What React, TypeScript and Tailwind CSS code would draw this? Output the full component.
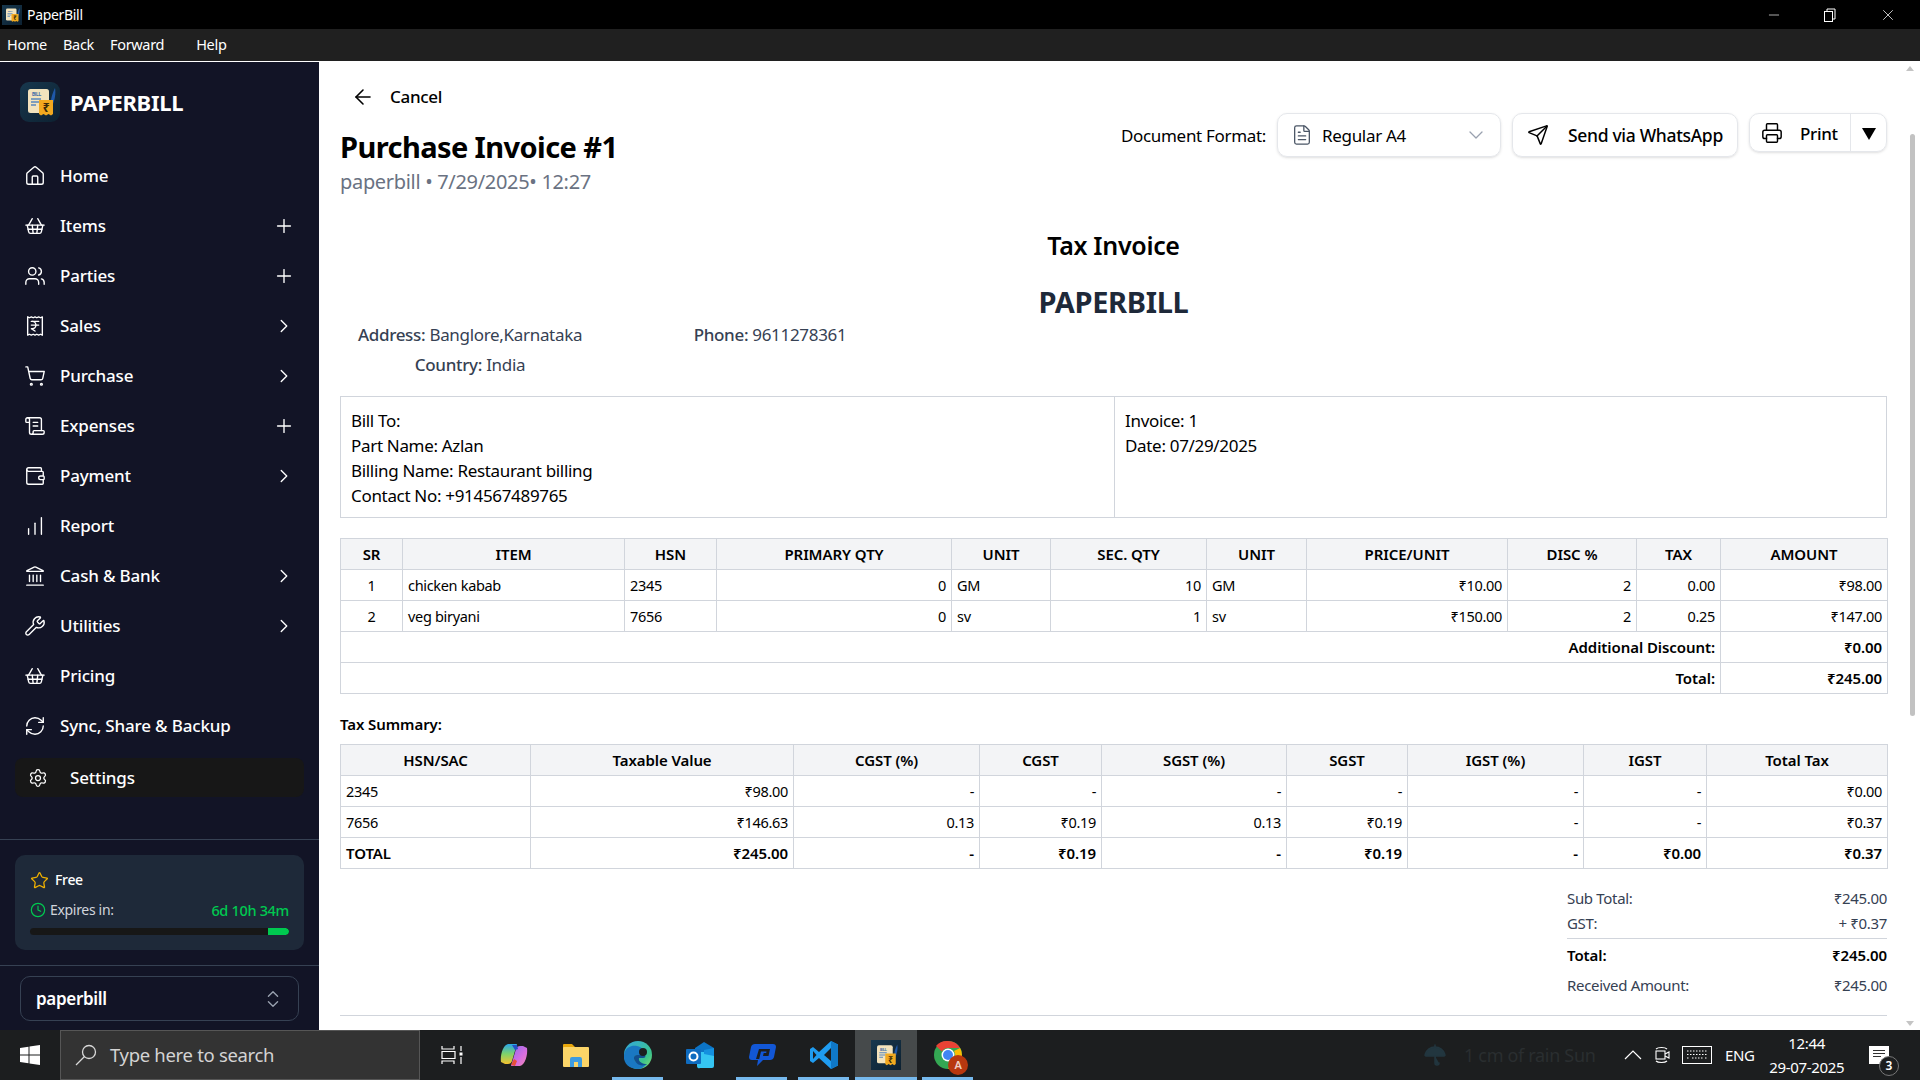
import {
  ArrowLeft, ChartNoAxesColumnIncreasing, ChevronDown, ChevronRight, ChevronsUpDown, Clock, FileText, House, Landmark,
  Minus, Plus, Printer, ReceiptIndianRupee, RefreshCw, ScrollText, Send, Settings, ShoppingBasket, ShoppingCart, Star,
  Umbrella, Users, Wallet, Wrench, X,
} from 'lucide-react';

const navItems = [
  { label: 'Home', icon: House },
  { label: 'Items', icon: ShoppingBasket, action: 'plus' },
  { label: 'Parties', icon: Users, action: 'plus' },
  { label: 'Sales', icon: ReceiptIndianRupee, action: 'arrow' },
  { label: 'Purchase', icon: ShoppingCart, action: 'arrow' },
  { label: 'Expenses', icon: ScrollText, action: 'plus' },
  { label: 'Payment', icon: Wallet, action: 'arrow' },
  { label: 'Report', icon: ChartNoAxesColumnIncreasing },
  { label: 'Cash & Bank', icon: Landmark, action: 'arrow' },
  { label: 'Utilities', icon: Wrench, action: 'arrow' },
  { label: 'Pricing', icon: ShoppingBasket },
  { label: 'Sync, Share & Backup', icon: RefreshCw },
];

const itemRows = [
  ['1', 'chicken kabab', '2345', '0', 'GM', '10', 'GM', '₹10.00', '2', '0.00', '₹98.00'],
  ['2', 'veg biryani', '7656', '0', 'sv', '1', 'sv', '₹150.00', '2', '0.25', '₹147.00'],
];

const taxRows = [
  ['2345', '₹98.00', '-', '-', '-', '-', '-', '-', '₹0.00'],
  ['7656', '₹146.63', '0.13', '₹0.19', '0.13', '₹0.19', '-', '-', '₹0.37'],
];

const taxTotal = ['TOTAL', '₹245.00', '-', '₹0.19', '-', '₹0.19', '-', '₹0.00', '₹0.37'];

const cell = 'border border-[#d1d5dc] px-[5px] h-[31px] p-0';
const plain = 'pt-[1px]';
const bold = 'text-[15px] font-semibold tracking-[-0.005em]';
const head = 'border border-[#d1d5dc] bg-[#f3f4f6] h-[31px] p-0 text-center text-[15px] font-semibold tracking-[-0.005em]';

function Logo({ size, square }: { size: number; square?: boolean }) {
  return (
    <svg width={size} height={size} viewBox="0 0 40 40" className="shrink-0">
      <defs>
        <linearGradient id="logoBg" x1="0" y1="0" x2="1" y2="1">
          <stop offset="0" stopColor="#17384e" />
          <stop offset="1" stopColor="#0d2131" />
        </linearGradient>
      </defs>
      <rect width="40" height="40" rx={square ? 0 : 9} fill="url(#logoBg)" />
      <rect x="8" y="7" width="21" height="24" rx="2.5" fill="#f2e3bd" />
      <text x="12" y="14" fontSize="5" fontWeight="700" fill="#3f6fa8" fontFamily="Roboto, sans-serif">BILL</text>
      <path d="M11 17h10M11 20h8M11 23h5" stroke="#5a88bd" strokeWidth="1.4" />
      <path d="M31 24c-1-5 1-12 4-18 1 5 0 12-3 18z" fill="#1f58a8" />
      <path d="M19 18h14v14l-2 1.500-2.500-1.500-2.500 1.500-2.500-1.500-2.500 1.500-2-1.500z" fill="#f1a91f" />
      <text x="26" y="30" textAnchor="middle" fontSize="12" fontWeight="700" fill="#3a2a0a" fontFamily="'Noto Sans', sans-serif">₹</text>
    </svg>
  );
}

function NavRow({ item }: { item: (typeof navItems)[number] }) {
  const Icon = item.icon;
  return (
    <div className="flex h-[50px] items-center pl-[24px] pr-[24px] text-white">
      <Icon size={22} strokeWidth={1.5} className="shrink-0" />
      <span className="ml-[14px] flex-1 text-[17px] font-medium tracking-[-0.01em]">{item.label}</span>
      {item.action === 'plus' && <Plus size={22} strokeWidth={1.5} />}
      {item.action === 'arrow' && <ChevronRight size={22} strokeWidth={1.5} />}
    </div>
  );
}

function Sidebar() {
  return (
    <aside className="flex w-[319px] shrink-0 flex-col bg-[#121426]">
      <div className="ml-5 mt-5 flex h-10 items-center">
        <Logo size={40} />
        <span className="ml-[10px] text-[22px] font-bold text-white">PAPERBILL</span>
      </div>
      <nav className="mt-[29px]">
        {navItems.map((item) => (
          <NavRow key={item.label} item={item} />
        ))}
      </nav>
      <div className="mx-[15px] mt-[7px] flex h-[39px] items-center rounded-lg bg-[#171717] pl-[13px] text-white">
        <Settings size={20} strokeWidth={1.5} />
        <span className="ml-[22px] text-[17px] font-medium tracking-[-0.01em]">Settings</span>
      </div>
      <div className="mt-auto border-t border-[#364153] p-[15px]">
        <div className="h-[95px] rounded-[10px] bg-[#1e2939] px-[15px] pt-[15px]">
          <div className="flex h-5 items-center text-sm font-medium text-white">
            <Star size={19} strokeWidth={1.6} className="text-[#f0b100]" />
            <span className="ml-[6px]">Free</span>
          </div>
          <div className="mt-[10px] flex h-5 items-center text-sm">
            <Clock size={16} strokeWidth={1.8} className="text-[#00c950]" />
            <span className="ml-[4px] flex-1 text-[#d1d5dc]">Expires in:</span>
            <span className="text-[14.500px] font-medium text-[#00c950]">6d 10h 34m</span>
          </div>
          <div className="mt-2 h-[7px] overflow-hidden rounded-full bg-[#171717]">
            <div className="ml-auto h-full w-[21px] rounded-r-full bg-[#00c950]" />
          </div>
        </div>
      </div>
      <div className="h-[65px] border-t border-[#364153] px-5 pt-[10px]">
        <div className="flex h-[45px] items-center rounded-[10px] border border-[#364153] pl-[15px] pr-[14px] text-white">
          <span className="flex-1 text-[17px] font-semibold">paperbill</span>
          <ChevronsUpDown size={22} strokeWidth={1.5} className="text-[#99a1af]" />
        </div>
      </div>
    </aside>
  );
}

function ItemsTable() {
  const rightCols = [3, 5, 7, 8, 9, 10];
  return (
    <table className="w-[1547px] table-fixed border-collapse text-[14.500px] text-black">
      <thead>
        <tr>
          <th className={`${head} w-[62px]`}>SR</th>
          <th className={`${head} w-[222px]`}>ITEM</th>
          <th className={`${head} w-[92px]`}>HSN</th>
          <th className={`${head} w-[235px]`}>PRIMARY QTY</th>
          <th className={`${head} w-[99px]`}>UNIT</th>
          <th className={`${head} w-[156px]`}>SEC. QTY</th>
          <th className={`${head} w-[100px]`}>UNIT</th>
          <th className={`${head} w-[201px]`}>PRICE/UNIT</th>
          <th className={`${head} w-[129px]`}>DISC %</th>
          <th className={`${head} w-[84px]`}>TAX</th>
          <th className={`${head} w-[167px]`}>AMOUNT</th>
        </tr>
      </thead>
      <tbody>
        {itemRows.map((row) => (
          <tr key={row[0]}>
            {row.map((value, i) => (
              <td key={i} className={`${cell} ${plain} ${i === 0 ? 'text-center' : rightCols.includes(i) ? 'text-right' : 'text-left'}`}>
                {value}
              </td>
            ))}
          </tr>
        ))}
        <tr>
          <td colSpan={10} className={`${cell} ${bold} text-right`}>Additional Discount:</td>
          <td className={`${cell} ${bold} text-right`}>₹0.00</td>
        </tr>
        <tr>
          <td colSpan={10} className={`${cell} ${bold} text-right`}>Total:</td>
          <td className={`${cell} ${bold} text-right`}>₹245.00</td>
        </tr>
      </tbody>
    </table>
  );
}

function TaxTable() {
  return (
    <table className="w-[1547px] table-fixed border-collapse text-[14.500px] text-black">
      <thead>
        <tr>
          <th className={`${head} w-[190px]`}>HSN/SAC</th>
          <th className={`${head} w-[263px]`}>Taxable Value</th>
          <th className={`${head} w-[186px]`}>CGST (%)</th>
          <th className={`${head} w-[122px]`}>CGST</th>
          <th className={`${head} w-[185px]`}>SGST (%)</th>
          <th className={`${head} w-[121px]`}>SGST</th>
          <th className={`${head} w-[176px]`}>IGST (%)</th>
          <th className={`${head} w-[123px]`}>IGST</th>
          <th className={`${head} w-[181px]`}>Total Tax</th>
        </tr>
      </thead>
      <tbody>
        {taxRows.map((row) => (
          <tr key={row[0]}>
            {row.map((value, i) => (
              <td key={i} className={`${cell} ${plain} ${i === 0 ? 'text-left' : 'text-right'}`}>{value}</td>
            ))}
          </tr>
        ))}
        <tr>
          {taxTotal.map((value, i) => (
            <td key={i} className={`${cell} ${bold} ${i === 0 ? 'text-left' : 'text-right'}`}>{value}</td>
          ))}
        </tr>
      </tbody>
    </table>
  );
}

function Main() {
  return (
    <main className="relative flex-1 overflow-hidden bg-white pl-[21px] pr-[33px]">
      <div className="flex items-start justify-between">
        <div>
          <div className="ml-[11px] mt-[19px] flex h-8 items-center text-black">
            <ArrowLeft size={24} strokeWidth={1.6} />
            <span className="ml-[15px] text-[17px] font-medium">Cancel</span>
          </div>
          <h1 className="mt-4 text-[29px] font-bold leading-9 tracking-[-0.02em] text-black">Purchase Invoice #1</h1>
          <p className="mt-[3px] text-xl leading-7 text-[#6a7282]">paperbill • 7/29/2025• 12:27</p>
        </div>
        <div className="mt-[51px] flex items-start">
          <span className="mr-[11px] flex h-11 items-center pt-[2px] text-[17px] text-black">Document Format:</span>
          <div className="flex h-11 w-[224px] items-center rounded-[10px] border border-[#e5e7eb] pl-[13px] pr-3 shadow-sm">
            <FileText size={22} strokeWidth={1.4} className="text-[#4a5565]" />
            <span className="ml-[9px] flex-1 pt-[2px] text-[17px] text-black">Regular A4</span>
            <ChevronDown size={24} strokeWidth={1.3} className="text-[#99a1af]" />
          </div>
          <div className="ml-[11px] flex h-11 w-[226px] items-center rounded-[10px] border border-[#e5e7eb] pl-[14px] shadow-sm">
            <Send size={22} strokeWidth={1.6} className="text-black" />
            <span className="ml-[19px] pt-[1px] text-[17.500px] font-medium text-black">Send via WhatsApp</span>
          </div>
          <div className="ml-[11px] flex h-[39px] w-[138px] items-center rounded-[10px] border border-[#e5e7eb] shadow-sm">
            <Printer size={22} strokeWidth={1.6} className="ml-[11px] text-black" />
            <span className="ml-[17px] flex-1 pt-[2px] text-[17px] font-medium text-black">Print</span>
            <span className="flex h-full w-[36px] items-center justify-center border-l border-[#e5e7eb] pt-[2px] text-black">
              <svg width="14" height="12" viewBox="0 0 14 12"><path d="M0 0h14L7 12z" fill="#000" /></svg>
            </span>
          </div>
        </div>
      </div>

      <div className="mt-[33px] text-center text-[25px] font-semibold leading-8 text-black">Tax Invoice</div>
      <div className="mt-[23px] text-center text-[29px] font-bold leading-9 text-[#1e2939]">PAPERBILL</div>

      <div className="flex text-[17px] leading-[30px] text-[#364153]">
        <div className="ml-[-20px] w-[300px] text-center">
          <div><span className="font-medium">Address:</span> Banglore,Karnataka</div>
          <div><span className="font-medium">Country:</span> India</div>
        </div>
        <div className="w-[300px] text-center">
          <span className="font-medium">Phone:</span> 9611278361
        </div>
      </div>

      <div className="mt-[16px] flex h-[122px] border border-[#d1d5dc] text-[17px] leading-[25px] text-black">
        <div className="w-[774px] border-r border-[#d1d5dc] px-[10px] pt-[11px]">
          <div>Bill To:</div>
          <div>Part Name: Azlan</div>
          <div>Billing Name: Restaurant billing</div>
          <div>Contact No: +914567489765</div>
        </div>
        <div className="px-[10px] pt-[11px]">
          <div>Invoice: 1</div>
          <div>Date: 07/29/2025</div>
        </div>
      </div>

      <div className="mt-[20px]"><ItemsTable /></div>

      <div className="mt-[20px] h-[30px] text-[15px] font-semibold leading-5 tracking-[-0.005em] text-black">Tax Summary:</div>
      <TaxTable />

      <div className="ml-auto mt-[17px] w-[320px] text-[15px] text-[#364153]">
        <div className="flex h-[25px] items-center justify-between"><span>Sub Total:</span><span>₹245.00</span></div>
        <div className="flex h-[25px] items-center justify-between"><span>GST:</span><span>+ ₹0.37</span></div>
        <div className="mt-[2px] flex h-[33px] items-center justify-between border-t border-[#d1d5dc] font-semibold tracking-[-0.005em] text-black"><span>Total:</span><span>₹245.00</span></div>
        <div className="mt-[1px] flex h-[27px] items-center justify-between"><span>Received Amount:</span><span>₹245.00</span></div>
      </div>
      <div className="mt-[16px] border-t border-[#d1d5dc]" />

      {/* scrollbar */}
      <div className="absolute right-[6px] top-[4px] h-0 w-0 border-x-[4px] border-b-[5px] border-x-transparent border-b-[#c4c4c4]" />
      <div className="absolute bottom-[4px] right-[6px] h-0 w-0 border-x-[4px] border-t-[5px] border-x-transparent border-t-[#c4c4c4]" />
      <div className="absolute right-[5px] top-[72px] h-[582px] w-[5px] rounded-full bg-[#c2c2c2]" />
    </main>
  );
}

function TaskCell({ children, running, active }: { children: React.ReactNode; running?: boolean; active?: boolean }) {
  return (
    <div className={`relative flex h-full w-[62px] items-center justify-center ${active ? 'bg-[#464a4b]' : ''}`}>
      {children}
      {running && <div className={`absolute bottom-0 h-[3px] bg-[#76b9ed] ${active ? 'left-0 right-0' : 'left-[5px] right-[6px]'}`} />}
    </div>
  );
}

function Taskbar() {
  return (
    <footer className="flex h-[50px] items-center bg-[#1c1e1f] text-white">
      <div className="flex h-full w-[60px] items-center justify-center">
        <svg width="20" height="20" viewBox="0 0 20 20" fill="#fff">
          <path d="M0 3l8.500-1.200V9.600H0zM9.500 1.600L20 0v9.600H9.500zM0 10.500h8.500v7.700L0 17zM9.500 10.500H20V20l-10.500-1.500z" />
        </svg>
      </div>
      <div className="flex h-full w-[360px] items-center border border-[#565656] bg-[#333333] pl-[14px]">
        <svg width="22" height="22" viewBox="0 0 22 22" fill="none" stroke="#d9d9d9" strokeWidth="1.300">
          <circle cx="14" cy="8" r="6.500" />
          <path d="M9.500 12.500L1 21" />
        </svg>
        <span className="ml-[13px] text-[18.500px] text-[#d4d4d4]">Type here to search</span>
      </div>
      <div className="flex h-full w-[63px] items-center justify-center">
        <svg width="22" height="20" viewBox="0 0 22 20" fill="none" stroke="#fff" strokeWidth="1.200">
          <path d="M1 1v3h12V1M1 6.500h13v7H1zM1 19v-3h12v3M20 1v5M20 12v7" />
          <rect x="18.500" y="7.500" width="3" height="3" fill="#fff" stroke="none" />
        </svg>
      </div>
      <TaskCell>
        <svg width="30" height="30" viewBox="0 0 30 30">
          <defs>
            <linearGradient id="copA" x1="0" y1="0" x2="0" y2="1">
              <stop offset="0" stopColor="#2aa5e8" /><stop offset="0.5" stopColor="#7ed36a" /><stop offset="1" stopColor="#f6c22e" />
            </linearGradient>
            <linearGradient id="copB" x1="0" y1="0" x2="1" y2="1">
              <stop offset="0" stopColor="#8a6cf0" /><stop offset="0.6" stopColor="#d86ee0" /><stop offset="1" stopColor="#f08bb0" />
            </linearGradient>
          </defs>
          <path d="M9 4h9l-5 17c-.500 2-2 3-4 3H6l-4-2C1 15 4 5 9 4z" fill="url(#copA)" />
          <path d="M21 26h-9l5-17c.500-2 2-3 4-3h3l4 2c1 7-2 17-7 18z" fill="url(#copB)" />
          <path d="M12 25l3-6 3 2-2 5z" fill="#e8503a" />
          <path d="M13 5h5l1 4-3 1z" fill="#2451c8" />
        </svg>
      </TaskCell>
      <TaskCell>
        <svg width="28" height="26" viewBox="0 0 28 26">
          <path d="M1 3a1 1 0 011-1h8l3 3v3H1z" fill="#e8a70c" />
          <rect x="1" y="5" width="26" height="20" rx="1" fill="#fbd568" />
          <path d="M8 25v-8a2 2 0 012-2h8a2 2 0 012 2v8h-4v-5h-4v5z" fill="#3e9ce0" />
        </svg>
      </TaskCell>
      <TaskCell running>
        <svg width="30" height="30" viewBox="0 0 30 30">
          <defs>
            <linearGradient id="edgeA" x1="0" y1="0" x2="1" y2="1">
              <stop offset="0" stopColor="#32a7de" /><stop offset="0.7" stopColor="#3cc48c" /><stop offset="1" stopColor="#8ee06a" />
            </linearGradient>
          </defs>
          <circle cx="15" cy="15" r="14" fill="url(#edgeA)" />
          <path d="M1 15C2 7 9 5 14 6c5 1 9 5 8 9h-8c-3 0-4 3-2 6 2 3 7 5 12 3-3 3-6 5-9 5C7 29 0 24 1 15z" fill="#1a78c2" />
          <path d="M12 21c-2-3-1-6 2-6h8c1 2 0 3-2 3h-4c-1 4 4 6 8 6-5 3-10 1-12-3z" fill="#124f8f" />
          <circle cx="20" cy="12" r="4" fill="#1c1e1f" />
        </svg>
      </TaskCell>
      <TaskCell>
        <svg width="30" height="30" viewBox="0 0 30 30">
          <path d="M10 8l9-6 10 6v4H10z" fill="#0c74c6" />
          <path d="M12 12h17v14a2 2 0 01-2 2H15a2 2 0 01-3-2z" fill="#35c5f2" />
          <path d="M19 10l10-2v8l-10-2z" fill="#1490df" />
          <rect x="1" y="9" width="15" height="15" rx="1" fill="#0f6cc0" />
          <circle cx="8.500" cy="16.500" r="4" fill="none" stroke="#fff" strokeWidth="2" />
        </svg>
      </TaskCell>
      <TaskCell running>
        <svg width="30" height="28" viewBox="0 0 30 28">
          <path d="M8 3h18c2 0 3 1 3 3l-2 10c-.500 2-2 3-4 3h-7l-6 6 1-6H5c-2 0-3-1-3-3L4 6c.500-2 2-3 4-3z" fill="#1257d6" />
          <path d="M12 8h11l-1.500 7H16l.700-3h2.500l.300-1.500H14L12.200 18H9z" fill="#1c1e1f" />
        </svg>
      </TaskCell>
      <TaskCell running>
        <svg width="30" height="30" viewBox="0 0 30 30">
          <path d="M22 1l7 3.500v21L22 29 10 18l-6 5-3-2v-12l3-2 6 5z" fill="#1f9cf0" />
          <path d="M22 8l-7 7 7 6z" fill="#1c1e1f" />
          <path d="M22 1l7 3.500v21L22 29z" fill="#0f78c8" />
          <path d="M4 11l3.500 4L4 19z" fill="#1c1e1f" />
        </svg>
      </TaskCell>
      <TaskCell running active>
        <Logo size={30} square />
      </TaskCell>
      <TaskCell running>
        <div className="relative h-[30px] w-[30px]">
          <svg width="30" height="30" viewBox="0 0 30 30">
            <circle cx="15" cy="15" r="14" fill="#34a853" />
            <path d="M15 1a14 14 0 0112.100 7H15a7 7 0 00-6.100 3.500L3 6a14 14 0 0112-5z" fill="#ea4335" />
            <path d="M27.100 8A14 14 0 0115 29l6-10.500A7 7 0 0021 11z" fill="#fbbc04" />
            <circle cx="15" cy="15" r="6.500" fill="#fff" />
            <circle cx="15" cy="15" r="5" fill="#4285f4" />
          </svg>
          <span className="absolute bottom-[-5px] right-[-5px] flex h-5 w-5 items-center justify-center rounded-full bg-[#b8380f] text-[11px] font-semibold text-[#f0d0c4]">A</span>
        </div>
      </TaskCell>

      <div className="ml-[444px] flex h-full items-center">
        <Umbrella size={24} strokeWidth={1.5} className="text-[#22363f]" fill="#22363f" />
        <span className="ml-[17px] w-[136px] text-lg text-[#2a2e30]">1 cm of rain Sun</span>
      </div>
      <div className="ml-[24px] flex h-full items-center">
        <svg width="18" height="10" viewBox="0 0 18 10" fill="none" stroke="#fff" strokeWidth="1.200"><path d="M1 9l8-8 8 8" /></svg>
        <svg className="ml-[13px]" width="16" height="20" viewBox="0 0 16 20" fill="none" stroke="#fff" strokeWidth="1.100">
          <path d="M1 4c2-2 9-2 11 0M1 16c2 2 9 2 11 0" />
          <rect x="1" y="6" width="9" height="8" />
          <path d="M10 9l4-2v6l-4-2" />
        </svg>
        <svg className="ml-[11px]" width="30" height="18" viewBox="0 0 30 18" fill="none" stroke="#fff">
          <rect x="0.500" y="0.500" width="29" height="17" />
          <path d="M5 5h20M5 8.500h20M5 12h3M10 12h11M23 12h2" strokeDasharray="1.500 1.500" />
        </svg>
        <span className="ml-[13px] text-[15px]">ENG</span>
        <div className="ml-[14px] w-[76px] text-center text-[15px] leading-6">
          <div>12:44</div>
          <div className="whitespace-nowrap">29-07-2025</div>
        </div>
        <div className="relative ml-[24px] h-[18px] w-[20px] bg-white">
          <div className="ml-[4px] mt-[4px] h-[1px] w-[12px] bg-[#333]" />
          <div className="ml-[4px] mt-[2px] h-[1px] w-[12px] bg-[#333]" />
          <div className="ml-[4px] mt-[2px] h-[1px] w-[8px] bg-[#333]" />
          <span className="absolute right-[-10px] top-[10px] flex h-5 w-5 items-center justify-center rounded-full border border-[#777] bg-[#1c1e1f] text-xs font-semibold">3</span>
        </div>
      </div>
    </footer>
  );
}

export default function App() {
  return (
    <div className="flex h-[1080px] w-[1920px] flex-col overflow-hidden bg-white font-['Noto_Sans',sans-serif] tracking-[-0.02em]">
      <header className="flex h-[29px] items-center bg-black text-white">
        <div className="ml-[2px] h-5 w-5"><Logo size={20} square /></div>
        <span className="ml-[5px] text-sm">PaperBill</span>
        <div className="ml-auto flex items-center">
          <Minus size={16} strokeWidth={1} />
          <svg className="ml-[41px]" width="14" height="14" viewBox="0 0 14 14" fill="none" stroke="#fff"><rect x="1.500" y="3.500" width="8" height="10" /><path d="M4 3V1h8v10h-2" /></svg>
          <X size={18} strokeWidth={1} className="ml-[42px] mr-[23px]" />
        </div>
      </header>
      <div className="flex h-[33px] items-start border-b border-white bg-[#202020] text-[14.500px] text-white">
        <div className="flex h-[31px] items-center pl-[7px]">
          <span>Home</span>
          <span className="ml-[16px]">Back</span>
          <span className="ml-[16px]">Forward</span>
          <span className="ml-[32px]">Help</span>
        </div>
      </div>
      <div className="flex h-[968px]">
        <Sidebar />
        <Main />
      </div>
      <Taskbar />
    </div>
  );
}
